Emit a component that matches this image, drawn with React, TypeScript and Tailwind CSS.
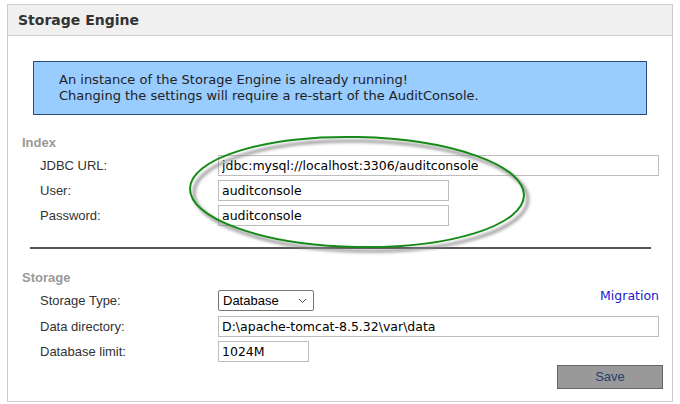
const verdana = "font-['DejaVu_Sans',Verdana,sans-serif]"
const arial = "font-['Liberation_Sans',Arial,sans-serif]"

function TextBox({ value, width }: { value: string; width: string }) {
  return (
    <input
      readOnly
      value={value}
      className={`${width} h-[21px] border border-[#bdbdbd] bg-white px-[3px] text-[12.5px] text-black outline-none ${verdana}`}
    />
  )
}

function Row({ label, children, className = "" }: { label: string; children: React.ReactNode; className?: string }) {
  return (
    <div className={`flex items-center ${className}`}>
      <div className={`w-[178px] text-[13px] text-[#333] ${arial}`}>{label}</div>
      {children}
    </div>
  )
}

function Highlight() {
  return (
    <svg className="pointer-events-none absolute inset-0" width="680" height="404" viewBox="0 0 680 404">
      <defs>
        <filter id="soft" x="-10%" y="-20%" width="120%" height="140%">
          <feGaussianBlur stdDeviation="1.8" />
        </filter>
      </defs>
      <g transform="rotate(1.2 357 192)">
        <ellipse cx="361" cy="196" rx="167" ry="55" fill="none" stroke="#8a8a8a" strokeWidth="3" filter="url(#soft)" opacity="0.85" />
        <ellipse cx="357" cy="192" rx="167" ry="55" fill="none" stroke="#168a16" strokeWidth="2" />
      </g>
    </svg>
  )
}

export default function App() {
  return (
    <div className="relative h-[404px] w-[680px] bg-white">
      <div className="ml-[7px] pt-[4px]">
        <div className="w-[666px] border border-[#cccccc] bg-white">
          <div className="flex h-[31px] items-center border-b border-[#cccccc] bg-[#f0f0f0] pl-[10px]">
            <span className={`text-[14px] font-bold text-[#333] ${verdana}`}>Storage Engine</span>
          </div>

          <div className="pb-[12px]">
            <div className={`mx-[25px] mt-[25px] h-[54px] border border-[#2b4d7a] bg-[#99ccff] pl-[25px] pt-[10px] text-[13px] leading-[16px] text-[#222] ${verdana}`}>
              <div>An instance of the Storage Engine is already running!</div>
              <div>Changing the settings will require a re-start of the AuditConsole.</div>
            </div>

            <div className={`mt-[20px] pl-[14px] text-[13px] font-bold leading-[16px] text-[#999] ${arial}`}>Index</div>
            <div className="mt-[4px] flex flex-col gap-[4px] pl-[32px]">
              <Row label="JDBC URL:">
                <TextBox value="jdbc:mysql://localhost:3306/auditconsole" width="w-[441px]" />
              </Row>
              <Row label="User:">
                <TextBox value="auditconsole" width="w-[231px]" />
              </Row>
              <Row label="Password:">
                <TextBox value="auditconsole" width="w-[231px]" />
              </Row>
            </div>

            <div className="ml-[22px] mt-[21px] h-[2px] w-[621px] bg-[#555]" />

            <div className={`mt-[21px] pl-[14px] text-[13px] font-bold leading-[16px] text-[#999] ${arial}`}>Storage</div>
            <div className="pl-[32px] pr-[13px]">
              <Row label="Storage Type:" className="mt-[4px]">
                <div className={`flex h-[21px] w-[96px] items-center justify-between rounded-[2px] border border-[#767676] bg-white pl-[4px] pr-[6px] text-[13px] text-black ${arial}`}>
                  <span>Database</span>
                  <svg width="9" height="6" viewBox="0 0 9 6">
                    <path d="M1 1 L4.5 4.5 L8 1" fill="none" stroke="#555" strokeWidth="1" />
                  </svg>
                </div>
                <a className={`-mt-[8px] ml-auto text-[12.5px] text-[#1a1acc] ${verdana}`}>Migration</a>
              </Row>
              <Row label="Data directory:" className="mt-[5px]">
                <TextBox value="D:\apache-tomcat-8.5.32\var\data" width="w-[441px]" />
              </Row>
              <Row label="Database limit:" className="mt-[4px]">
                <TextBox value="1024M" width="w-[91px]" />
              </Row>
            </div>
            <div className="mt-[3px] flex justify-end pr-[9px]">
              <button className={`h-[24px] w-[106px] border border-[#666] bg-[#999999] text-[13px] text-[#1f3f6f] ${arial}`}>Save</button>
            </div>
          </div>
        </div>
      </div>
      <Highlight />
    </div>
  )
}
